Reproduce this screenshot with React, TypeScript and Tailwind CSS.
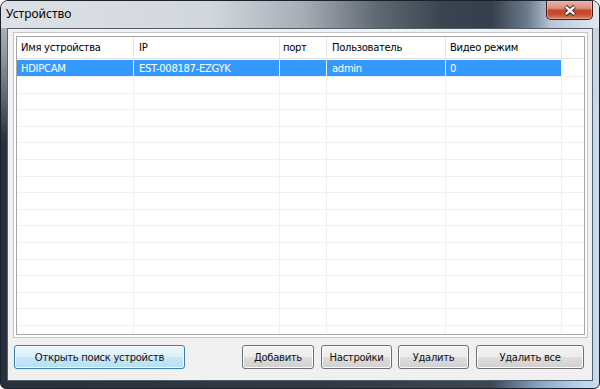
import React from "react";

const font = "font-['DejaVu_Sans',sans-serif] text-[10px] tracking-[-0.3px]";

const colW = ["w-[117px]", "w-[146px]", "w-[47px]", "w-[119px]", "w-[116px]"];
const colPad = ["pl-[4px]", "pl-[5px]", "pl-[3px]", "pl-[5px]", "pl-[4px]"];
const headers = ["Имя устройства", "IP", "порт", "Пользователь", "Видео режим"];
const firstRow = ["HDIPCAM", "EST-008187-EZGYK", "", "admin", "0"];

function CloseButton() {
  return (
    <div className="mr-[6px] w-[47px] h-[19px] rounded-b-[5px] border border-t-0 border-[#4a1a16] bg-[linear-gradient(to_bottom,#e9b0a4_0%,#dd917f_40%,#c4462c_52%,#c7502f_75%,#d9876b_100%)] shadow-[inset_0_0_0_1px_rgba(255,200,190,0.45)] flex items-center justify-center">
      <svg width="14" height="11" viewBox="0 0 14 11">
        <path d="M2.5 1.5 L11.5 9.5 M11.5 1.5 L2.5 9.5" stroke="#3b2220" strokeWidth="4.2" strokeLinecap="butt" fill="none" />
        <path d="M2.8 1.8 L11.2 9.2 M11.2 1.8 L2.8 9.2" stroke="#ffffff" strokeWidth="2.4" strokeLinecap="butt" fill="none" />
      </svg>
    </div>
  );
}

function Btn({ label, w, primary }: { label: string; w: string; primary?: boolean }) {
  const base =
    "h-[24px] rounded-[3px] border flex items-center justify-center text-[#111] " + w + " " + font;
  const look = primary
    ? "border-[#3c7fb1] bg-[linear-gradient(to_bottom,#eaf6fd_0%,#dcf0fb_50%,#c7e8fa_50%,#b4dff5_100%)] shadow-[inset_0_0_0_1px_#f2faff]"
    : "border-[#707070] bg-[linear-gradient(to_bottom,#f4f4f4_0%,#ececec_50%,#dedede_50%,#d0d0d0_100%)] shadow-[inset_0_0_0_1px_#fcfcfc]";
  return <div className={base + " " + look}>{label}</div>;
}

export default function App() {
  const emptyRows = Array.from({ length: 16 });
  return (
    <div className="w-[600px] h-[389px] bg-white">
      <div className="w-[600px] h-[389px] rounded-t-[8px] rounded-b-[6px] border border-[#1a212b] overflow-hidden bg-[linear-gradient(to_right,#27303c_0%,#323c49_60%,#3c4755_82%,#86a6ca_90%,#bcd4ee_97%,#c8dcf1_100%)]">
        <div className="w-full h-full flex flex-col bg-[linear-gradient(to_bottom,rgba(205,210,216,0.95)_0px,rgba(205,210,216,0.6)_60px,rgba(205,210,216,0)_140px)]">
          {/* Title bar */}
          <div className="h-[27px] flex items-start justify-between bg-[linear-gradient(to_right,#dde1e6_0%,#d2d7dc_35%,#a8afb7_50%,#5f6973_63%,#3a4450_74%,#36404c_82%,#6b7b8d_88%,#b8c7d7_92%,#dfe8f2_100%)]">
            <span className="pl-[5px] pt-[5px] text-[12px] leading-[16px] text-black font-['Noto_Sans',sans-serif]">
              Устройство
            </span>
            <CloseButton />
          </div>

          {/* Client area */}
          <div className="flex-1 mx-[6px] mb-[7px] border border-[#56616d] bg-[#f0f0f0] flex flex-col pt-[3px]">
            {/* Panel */}
            <div className="ml-[5px] mr-[4px] h-[306px] border border-[#c4c4c4] bg-white pt-[3px] pl-[2px] pr-[2px] pb-[2px] flex">
              <div className="flex-1 border border-[#a5a5a5] bg-white flex flex-col overflow-hidden">
                {/* Header */}
                <div className="h-[22px] flex border-b border-[#e5e5e5] shrink-0">
                  {headers.map((h, i) => (
                    <div
                      key={i}
                      className={colW[i] + " " + colPad[i] + " " + font + " shrink-0 h-full border-r border-[#e5e5e5] flex items-center text-black"}
                    >
                      {h}
                    </div>
                  ))}
                  <div className="flex-1 h-full" />
                </div>
                {/* Selected row */}
                <div className="h-[18px] flex border-b border-[#f0f0f0] shrink-0">
                  {firstRow.map((t, i) => (
                    <div key={i} className={colW[i] + " shrink-0 h-full border-r border-[#f0f0f0] pt-[1px]"}>
                      <div className={"h-full bg-[#3399ff] text-white flex items-center " + colPad[i] + " " + font}>{t}</div>
                    </div>
                  ))}
                  <div className="flex-1 h-full" />
                </div>
                {emptyRows.map((_, r) => (
                  <div key={r} className="h-[16.6px] flex border-b border-[#f0f0f0] shrink-0">
                    {colW.map((w, i) => (
                      <div key={i} className={w + " shrink-0 h-full border-r border-[#f0f0f0]"} />
                    ))}
                    <div className="flex-1 h-full" />
                  </div>
                ))}
              </div>
            </div>

            {/* Buttons */}
            <div className="mt-[7px] ml-[6px] mr-[8px] flex items-center">
              <Btn label="Открыть поиск устройств" w="w-[171px]" primary />
              <div className="flex-1" />
              <Btn label="Добавить" w="w-[72px]" />
              <div className="w-[7px]" />
              <Btn label="Настройки" w="w-[71px]" />
              <div className="w-[6px]" />
              <Btn label="Удалить" w="w-[71px]" />
              <div className="w-[7px]" />
              <Btn label="Удалить все" w="w-[108px]" />
            </div>
          </div>
        </div>
      </div>
    </div>
  );
}
